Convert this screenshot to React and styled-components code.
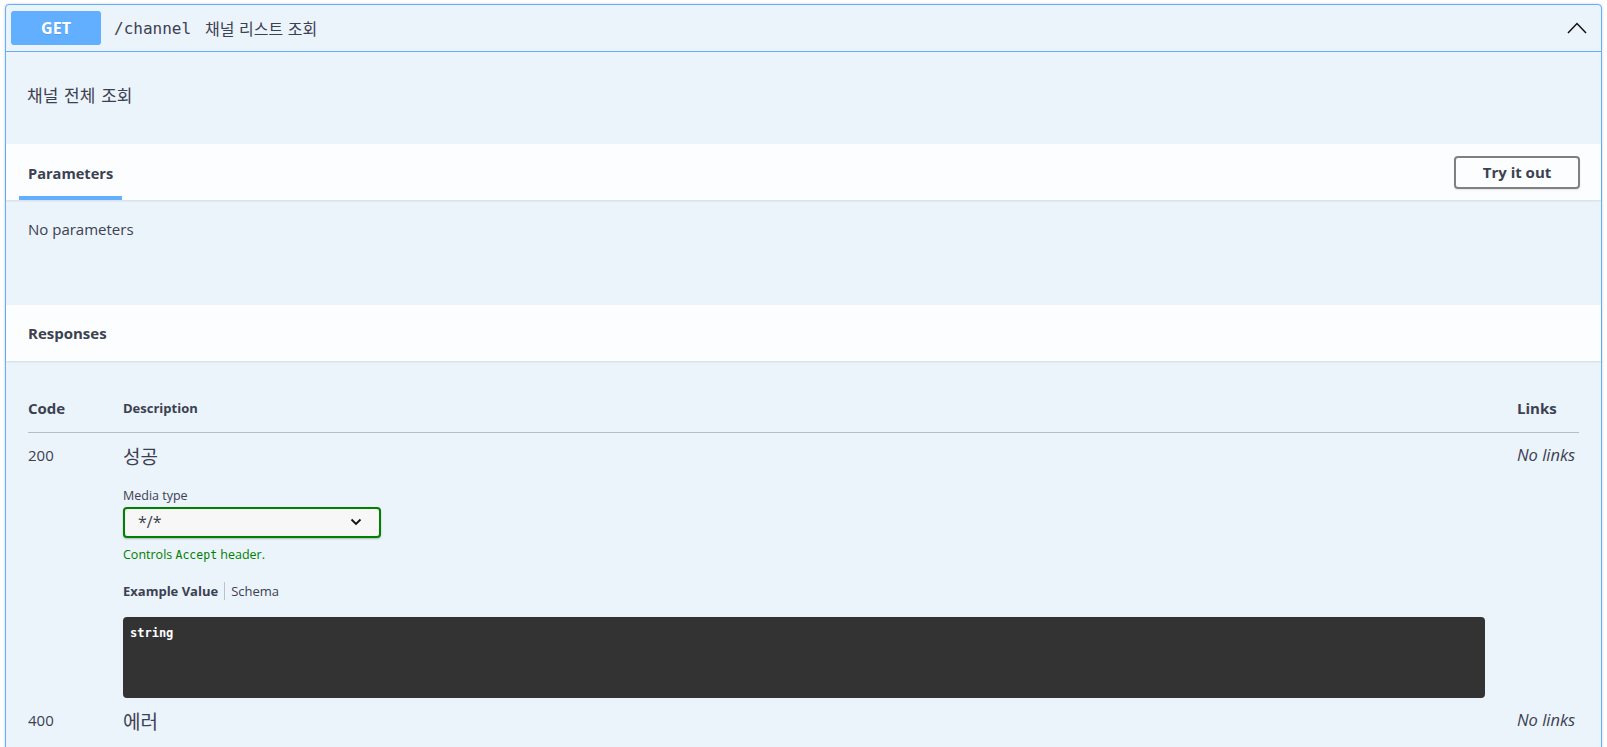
import React from 'react'
import styled, {createGlobalStyle} from 'styled-components'

const GlobalStyle = createGlobalStyle`
    html, body {
        margin: 0;
        overflow: hidden;
        background: #fff;
    }
    body {
        font-family: "Open Sans", "Noto Sans CJK KR", sans-serif;
        color: #3b4151;
    }
`;

const Page = styled.div`
    padding: 4px 5px 0;
`;

const Opblock = styled.div`
    border: 1px solid #61affe;
    border-radius: 4px;
    background: #ebf3fb;
    box-shadow: 0 0 3px rgba(0, 0, 0, 0.19);
`;

const Summary = styled.div`
    display: flex;
    align-items: center;
    padding: 6px 14px 6px 5px;
    border-bottom: 1px solid #61affe;
`;

const Method = styled.span`
    width: 90px;
    height: 34px;
    display: flex;
    align-items: center;
    justify-content: center;
    background: #61affe;
    border-radius: 3px;
    color: #fff;
    font-size: 16px;
    font-weight: 700;
    text-shadow: 0 1px 0 rgba(0, 0, 0, 0.1);
`;

const Path = styled.span`
    margin-left: 13px;
    font-family: "DejaVu Sans Mono", monospace;
    font-size: 16px;
    color: #3b4151;
`;

const SummaryDesc = styled.span`
    margin-left: 14px;
    font-size: 16px;
    word-spacing: 1px;
    font-family: "Noto Sans CJK KR", sans-serif;
    color: #3b4151;
`;

const Arrow = styled.svg`
    margin-left: auto;
    display: block;
`;

const DescWrapper = styled.div`
    height: 92px;
    box-sizing: border-box;
    padding: 32px 21px 0;
    font-size: 17px;
    word-spacing: 2px;
    line-height: 22px;
    font-family: "Noto Sans CJK KR", sans-serif;
`;

const SectionHeader = styled.div`
    height: 56px;
    box-sizing: border-box;
    display: flex;
    align-items: center;
    justify-content: space-between;
    padding: 0 21px 0 22px;
    background: rgba(255, 255, 255, 0.8);
    box-shadow: 0 1px 2px rgba(0, 0, 0, 0.1);
`;

const SectionTitle = styled.h4`
    margin: 0;
    font-size: 15px;
    font-weight: 700;
    line-height: 20px;
    position: relative;
`;

const TabTitle = styled(SectionTitle)`
    align-self: stretch;
    display: flex;
    align-items: center;
    padding-top: 1px;
    font-size: 14.6px;

    &::after {
        content: "";
        position: absolute;
        left: -9px;
        right: -9px;
        bottom: 0;
        height: 4px;
        background: #61affe;
    }
`;

const TryButton = styled.button`
    width: 126px;
    height: 33px;
    border: 2px solid #808080;
    border-radius: 4px;
    background: transparent;
    box-shadow: 0 1px 2px rgba(0, 0, 0, 0.1);
    font-family: inherit;
    font-size: 15px;
    font-weight: 700;
    color: #3b4151;
    padding: 0;
`;

const ParamsBody = styled.div`
    height: 105px;
    box-sizing: border-box;
    padding: 19px 22px 0;
    font-size: 15px;
    line-height: 20px;
`;

const ResponsesBody = styled.div`
    padding: 22px 22px 60px;
`;

const Row = styled.div`
    display: grid;
    grid-template-columns: 95px 1fr 94px;
    border-bottom: ${p => p.$head ? '1px solid rgba(59, 65, 81, 0.3)' : 'none'};
`;

const Cell = styled.div`
    min-width: 0;
    padding-top: ${p => p.$head ? 0 : 12}px;
    padding-left: ${p => p.$links ? 32 : 0}px;
    height: ${p => p.$head ? '49px' : 'auto'};
    display: ${p => p.$head ? 'flex' : 'block'};
    align-items: center;
    font-size: ${p => p.$small ? 13 : p.$italic ? 16.5 : 15}px;
    font-weight: ${p => p.$head ? 700 : 400};
    font-style: ${p => p.$italic ? 'italic' : 'normal'};
    line-height: 20px;
    white-space: nowrap;
`;

const RespDesc = styled.div`
    font-family: "Noto Sans CJK KR", sans-serif;
    font-size: 19px;
    line-height: 22px;
`;

const Label = styled.div`
    margin-top: 20px;
    font-size: 12.5px;
    line-height: 18px;
`;

const SelectBox = styled.div`
    margin-top: 2px;
    width: 258px;
    height: 31px;
    box-sizing: border-box;
    border: 2px solid #008000;
    border-radius: 4px;
    background: #f7f7f7;
    box-shadow: 0 1px 2px 0 rgba(0, 0, 0, 0.25);
    display: flex;
    align-items: center;
    justify-content: space-between;
    padding: 0 17px 2px 13px;
    font-size: 16px;
    font-weight: 400;
`;

const Hint = styled.div`
    margin-top: 8px;
    color: #008000;
    font-size: 12.5px;
    line-height: 18px;

    & code {
        font-family: "DejaVu Sans Mono", monospace;
        font-size: 11.5px;
    }
`;

const ExampleTabs = styled.ul`
    list-style: none;
    margin: 18px 0 0;
    padding: 0;
    display: flex;
    font-size: 13px;
    line-height: 18px;
`;

const ExampleTab = styled.li`
    font-weight: ${p => p.$active ? 700 : 400};
    padding-right: ${p => p.$active ? 6 : 0}px;
    margin-right: ${p => p.$active ? 6 : 0}px;
    border-right: ${p => p.$active ? '1px solid rgba(0, 0, 0, 0.2)' : 'none'};
`;

const CodeBlock = styled.pre`
    margin: 17px 0 0;
    height: 81px;
    box-sizing: border-box;
    padding: 7px;
    background: #333;
    border-radius: 4px;
    color: #fff;
    font-family: "DejaVu Sans Mono", monospace;
    font-size: 12px;
    font-weight: 700;
    line-height: 18px;
`;

const Chevron = () => (
    <svg width="12" height="8" viewBox="0 0 12 8">
        <polyline points="1.5,1.5 6,6 10.5,1.5" fill="none" stroke="#111" strokeWidth="1.8"/>
    </svg>
);

const responses = [
    {code: '200', desc: '성공', media: true},
    {code: '400', desc: '에러'}
];

export default function App() {
    return (
        <Page>
            <GlobalStyle/>
            <Opblock>
                <Summary>
                    <Method>GET</Method>
                    <Path>/channel</Path>
                    <SummaryDesc>채널 리스트 조회</SummaryDesc>
                    <Arrow width="20" height="12" viewBox="0 0 20 12">
                        <polyline points="1,11 10,1.5 19,11" fill="none" stroke="#111" strokeWidth="1.5"/>
                    </Arrow>
                </Summary>

                <DescWrapper>채널 전체 조회</DescWrapper>

                <SectionHeader>
                    <TabTitle>Parameters</TabTitle>
                    <TryButton>Try it out</TryButton>
                </SectionHeader>
                <ParamsBody>No parameters</ParamsBody>

                <SectionHeader>
                    <SectionTitle>Responses</SectionTitle>
                </SectionHeader>

                <ResponsesBody>
                    <Row $head>
                        <Cell $head>Code</Cell>
                        <Cell $head $small>Description</Cell>
                        <Cell $head $links>Links</Cell>
                    </Row>
                    {responses.map(r => (
                        <Row key={r.code}>
                            <Cell>{r.code}</Cell>
                            <Cell>
                                <RespDesc>{r.desc}</RespDesc>
                                {r.media && (
                                    <div>
                                        <Label>Media type</Label>
                                        <SelectBox>
                                            <span>*/*</span>
                                            <Chevron/>
                                        </SelectBox>
                                        <Hint>Controls <code>Accept</code> header.</Hint>
                                        <ExampleTabs>
                                            <ExampleTab $active>Example Value</ExampleTab>
                                            <ExampleTab>Schema</ExampleTab>
                                        </ExampleTabs>
                                        <CodeBlock>string</CodeBlock>
                                    </div>
                                )}
                            </Cell>
                            <Cell $links $italic>No links</Cell>
                        </Row>
                    ))}
                </ResponsesBody>
            </Opblock>
        </Page>
    )
}
